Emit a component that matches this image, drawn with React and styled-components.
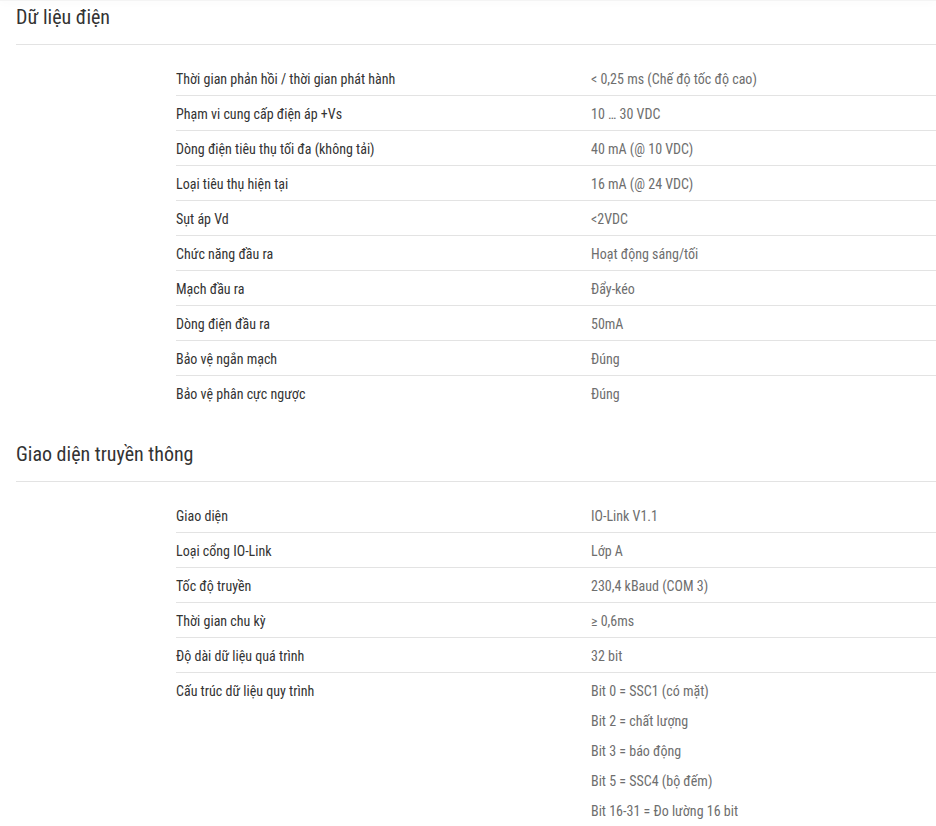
import React from 'react';
import styled, { createGlobalStyle } from 'styled-components';

const GlobalStyle = createGlobalStyle`
  body {
    margin: 0;
    background: #fff;
    font-family: "Roboto Condensed", "Liberation Sans Narrow", "Roboto", "Noto Sans", sans-serif;
  }
`;

const electrical = [
  ['Thời gian phản hồi / thời gian phát hành', ['< 0,25 ms (Chế độ tốc độ cao)']],
  ['Phạm vi cung cấp điện áp +Vs', ['10 … 30 VDC']],
  ['Dòng điện tiêu thụ tối đa (không tải)', ['40 mA (@ 10 VDC)']],
  ['Loại tiêu thụ hiện tại', ['16 mA (@ 24 VDC)']],
  ['Sụt áp Vd', ['<2VDC']],
  ['Chức năng đầu ra', ['Hoạt động sáng/tối']],
  ['Mạch đầu ra', ['Đẩy-kéo']],
  ['Dòng điện đầu ra', ['50mA']],
  ['Bảo vệ ngắn mạch', ['Đúng']],
  ['Bảo vệ phân cực ngược', ['Đúng']],
];

const communication = [
  ['Giao diện', ['IO-Link V1.1']],
  ['Loại cổng IO-Link', ['Lớp A']],
  ['Tốc độ truyền', ['230,4 kBaud (COM 3)']],
  ['Thời gian chu kỳ', ['≥ 0,6ms']],
  ['Độ dài dữ liệu quá trình', ['32 bit']],
  ['Cấu trúc dữ liệu quy trình', [
    'Bit 0 = SSC1 (có mặt)',
    'Bit 2 = chất lượng',
    'Bit 3 = báo động',
    'Bit 5 = SSC4 (bộ đếm)',
    'Bit 16-31 = Đo lường 16 bit',
  ]],
];

const Section = ({ title, rows }) => (
  <SectionSC>
    <HeadingSC>{title}</HeadingSC>
    <TableSC>
      {rows.map(([label, values]) => (
        <RowSC key={label}>
          <LabelSC>{label}</LabelSC>
          <ValueSC>
            {values.map((v) => (
              <div key={v}>{v}</div>
            ))}
          </ValueSC>
        </RowSC>
      ))}
    </TableSC>
  </SectionSC>
);

export default () => (
  <PageSC>
    <GlobalStyle />
    <ShadeSC />
    <Section title="Dữ liệu điện" rows={electrical} />
    <Section title="Giao diện truyền thông" rows={communication} />
  </PageSC>
);

const PageSC = styled.div`
  position: relative;
  width: 936px;
  height: 826px;
  overflow: hidden;
`;

const ShadeSC = styled.div`
  height: 1px;
  box-shadow: 0 0 8px rgba(0, 0, 0, 0.12);
  background: #f4f4f4;
`;

const SectionSC = styled.section`
  margin-bottom: 28px;
`;

const HeadingSC = styled.h2`
  margin: 0 0 0 16px;
  padding: 4px 0 15px;
  font-size: 20px;
  line-height: 24px;
  font-weight: 400;
  color: #333;
  border-bottom: 1px solid #e3e3e3;
`;

const TableSC = styled.div`
  margin: 16px 0 0 176px;
`;

const RowSC = styled.div`
  display: grid;
  grid-template-columns: 415px 1fr;
  padding: 3px 0 1px;
  line-height: 30px;
  font-size: 14px;
  border-bottom: 1px solid #e3e3e3;

  &:last-child {
    border-bottom: none;
  }
`;

const LabelSC = styled.div`
  color: #333;
`;

const ValueSC = styled.div`
  color: #6e6e6e;
`;
